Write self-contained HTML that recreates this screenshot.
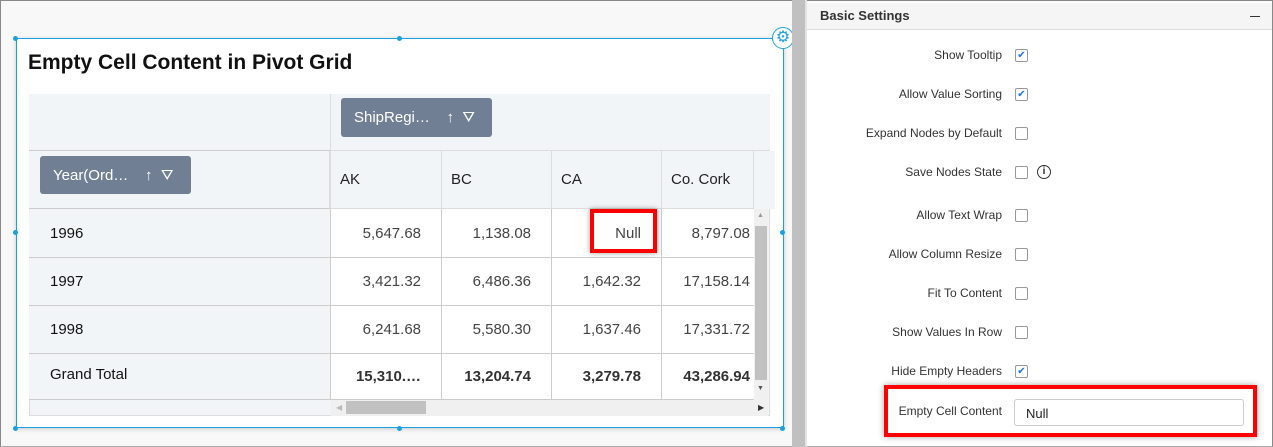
<!DOCTYPE html>
<html><head><style>
*{box-sizing:border-box;margin:0;padding:0}
body{width:1273px;height:447px;position:relative;overflow:hidden;background:#f8f8f8;font-family:"Liberation Sans",sans-serif;color:#222}
.a{position:absolute}
.c{position:absolute;border-right:1px solid #ccc;border-bottom:1px solid #ccc;font-size:15px;display:flex;align-items:center}
.rh{background:#f2f5f8;padding-left:21px;color:#111}
.v{background:#fff;justify-content:flex-end;padding-right:20px;color:#444}
.b{font-weight:bold;color:#333}
.pill{position:absolute;background:#717f94;color:#fff;border-radius:3px;font-size:15px;display:flex;align-items:center;padding-left:13px}
.lab{position:absolute;right:271px;font-size:12px;color:#333;text-align:right;white-space:nowrap}
.cb{position:absolute;left:1015px;width:13px;height:13px;border:1px solid #999;border-radius:2px;background:#fff}
.dot{position:absolute;width:5px;height:5px;border-radius:50%;background:#1ba1e2}
</style></head><body>
<div class="a" style="left:0;top:0;width:1273px;height:447px;border:1px solid #888;border-bottom-color:#aaa"></div>
<div class="a" style="left:16px;top:38px;width:768px;height:390px;background:#fff;border:1px solid #1ba1e2;box-shadow:0 1px 4px rgba(0,0,0,.2)"></div>
<div class="dot" style="left:13px;top:36px"></div><div class="dot" style="left:397px;top:36px"></div>
<div class="dot" style="left:13px;top:426px"></div><div class="dot" style="left:397px;top:426px"></div><div class="dot" style="left:780px;top:426px"></div>
<div class="dot" style="left:13px;top:230px"></div><div class="dot" style="left:780px;top:230px"></div>
<div class="a" style="left:772px;top:27px;width:22px;height:22px;border-radius:50%;border:1px solid #1ba1e2;background:#fff;color:#1ba1e2;font-size:16px;line-height:20px;text-align:center">⚙</div>
<div class="a" style="left:28px;top:51px;font-size:21px;font-weight:bold;color:#111">Empty Cell Content in Pivot Grid</div>
<div class="a" style="left:29px;top:94px;width:741px;height:322px;border:1px solid #ddd;background:#f2f5f8"></div>
<div class="c rh" style="left:29px;top:94px;width:302px;height:57px;border-right:1px solid #ddd"></div>
<div class="c rh" style="left:331px;top:94px;width:439px;height:57px;border-right:0;border-bottom:1px solid #ddd"></div>
<div class="pill" style="left:341px;top:98px;width:151px;height:39px">ShipRegi…&nbsp;&nbsp;&nbsp;&nbsp;↑&nbsp;&nbsp;⛛</div>
<div class="c rh" style="left:29px;top:151px;width:302px;height:58px;border-right:2px solid #ddd"></div>
<div class="pill" style="left:40px;top:156px;width:151px;height:38px">Year(Ord…&nbsp;&nbsp;&nbsp;&nbsp;↑&nbsp;&nbsp;⛛</div>
<div class="c rh" style="left:331px;top:151px;width:111px;height:58px;padding-left:9px;color:#222;border-color:#ddd">AK</div>
<div class="c rh" style="left:442px;top:151px;width:110px;height:58px;padding-left:9px;color:#222;border-color:#ddd">BC</div>
<div class="c rh" style="left:552px;top:151px;width:110px;height:58px;padding-left:9px;color:#222;border-color:#ddd">CA</div>
<div class="c rh" style="left:662px;top:151px;width:92px;height:58px;padding-left:9px;color:#222;border-color:#ddd">Co. Cork</div>
<div class="c rh" style="left:754px;top:151px;width:16px;height:58px;border:0"></div>

<div class="c rh" style="left:29px;top:209px;width:302px;height:49px">1996</div>
<div class="c v" style="left:331px;top:209px;width:111px;height:49px">5,647.68</div>
<div class="c v" style="left:442px;top:209px;width:110px;height:49px">1,138.08</div>
<div class="c v" style="left:552px;top:209px;width:110px;height:49px">Null</div>
<div class="c v" style="left:662px;top:209px;width:92px;height:49px;padding-right:4px;border-right:0">8,797.08</div>
<div class="c rh" style="left:29px;top:258px;width:302px;height:48px">1997</div>
<div class="c v" style="left:331px;top:258px;width:111px;height:48px">3,421.32</div>
<div class="c v" style="left:442px;top:258px;width:110px;height:48px">6,486.36</div>
<div class="c v" style="left:552px;top:258px;width:110px;height:48px">1,642.32</div>
<div class="c v" style="left:662px;top:258px;width:92px;height:48px;padding-right:4px;border-right:0">17,158.14</div>
<div class="c rh" style="left:29px;top:306px;width:302px;height:48px">1998</div>
<div class="c v" style="left:331px;top:306px;width:111px;height:48px">6,241.68</div>
<div class="c v" style="left:442px;top:306px;width:110px;height:48px">5,580.30</div>
<div class="c v" style="left:552px;top:306px;width:110px;height:48px">1,637.46</div>
<div class="c v" style="left:662px;top:306px;width:92px;height:48px;padding-right:4px;border-right:0">17,331.72</div>
<div class="c rh" style="left:29px;top:354px;width:302px;height:46px;padding-bottom:4px">Grand Total</div>
<div class="c v b" style="left:331px;top:354px;width:111px;height:46px">15,310.…</div>
<div class="c v b" style="left:442px;top:354px;width:110px;height:46px">13,204.74</div>
<div class="c v b" style="left:552px;top:354px;width:110px;height:46px">3,279.78</div>
<div class="c v b" style="left:662px;top:354px;width:92px;height:46px;padding-right:4px;border-right:0">43,286.94</div>
<div class="a" style="left:754px;top:209px;width:14px;height:191px;background:#f0f0f0"></div>
<div class="a" style="left:755px;top:226px;width:12px;height:154px;background:#c1c1c1"></div>
<div class="a" style="left:331px;top:400px;width:437px;height:16px;background:#f0f0f0"></div>
<div class="a" style="left:346px;top:401px;width:80px;height:13px;background:#c1c1c1"></div>
<div class="a" style="left:757px;top:212px;font-size:7px;color:#999">▲</div>
<div class="a" style="left:757px;top:385px;font-size:7px;color:#555">▼</div>
<div class="a" style="left:758px;top:403px;font-size:8px;color:#333">▶</div>
<div class="a" style="left:336px;top:403px;font-size:8px;color:#bbb">◀</div>
<div class="a" style="left:590px;top:209px;width:67px;height:44px;border:4px solid #f00;box-shadow:0 0 5px rgba(0,0,0,.4)"></div>
<div class="a" style="left:792px;top:0;width:13px;height:447px;background:#c0c0c0"></div>
<div class="a" style="left:805px;top:0;width:2px;height:447px;background:#e4e4e4"></div>
<div class="a" style="left:807px;top:2px;width:465px;height:444px;background:#fff"></div>
<div class="a" style="left:807px;top:3px;width:465px;height:27px;background:#f5f5f5;border-bottom:1px solid #ddd"></div>
<div class="a" style="left:820px;top:8px;font-size:13px;font-weight:bold;color:#333">Basic Settings</div>
<div class="a" style="left:1250px;top:16px;width:10px;height:1px;background:#333"></div>
<div class="lab" style="top:48px">Show Tooltip</div><div class="cb" style="top:49px;color:#1a73e8;font-size:10px;line-height:11px;text-align:center">✔</div>
<div class="lab" style="top:87px">Allow Value Sorting</div><div class="cb" style="top:88px;color:#1a73e8;font-size:10px;line-height:11px;text-align:center">✔</div>
<div class="lab" style="top:126px">Expand Nodes by Default</div><div class="cb" style="top:127px"></div>
<div class="lab" style="top:165px">Save Nodes State</div><div class="cb" style="top:166px"></div>
<div class="a" style="left:1037px;top:165px;width:14px;height:14px;border:1.5px solid #333;border-radius:50%;font-size:10px;font-weight:bold;text-align:center;line-height:11px">i</div>
<div class="lab" style="top:208px">Allow Text Wrap</div><div class="cb" style="top:209px"></div>
<div class="lab" style="top:247px">Allow Column Resize</div><div class="cb" style="top:248px"></div>
<div class="lab" style="top:286px">Fit To Content</div><div class="cb" style="top:287px"></div>
<div class="lab" style="top:325px">Show Values In Row</div><div class="cb" style="top:326px"></div>
<div class="lab" style="top:364px">Hide Empty Headers</div><div class="cb" style="top:365px;color:#1a73e8;font-size:10px;line-height:11px;text-align:center">✔</div>
<div class="lab" style="top:404px">Empty Cell Content</div>
<div class="a" style="left:1014px;top:399px;width:230px;height:27px;border:1px solid #ccc;border-radius:3px;font-size:13px;padding:6px 11px;color:#222">Null</div>
<div class="a" style="left:884px;top:385px;width:373px;height:52px;border:4px solid #f00;box-shadow:0 0 6px rgba(0,0,0,.35)"></div>
</body></html>
